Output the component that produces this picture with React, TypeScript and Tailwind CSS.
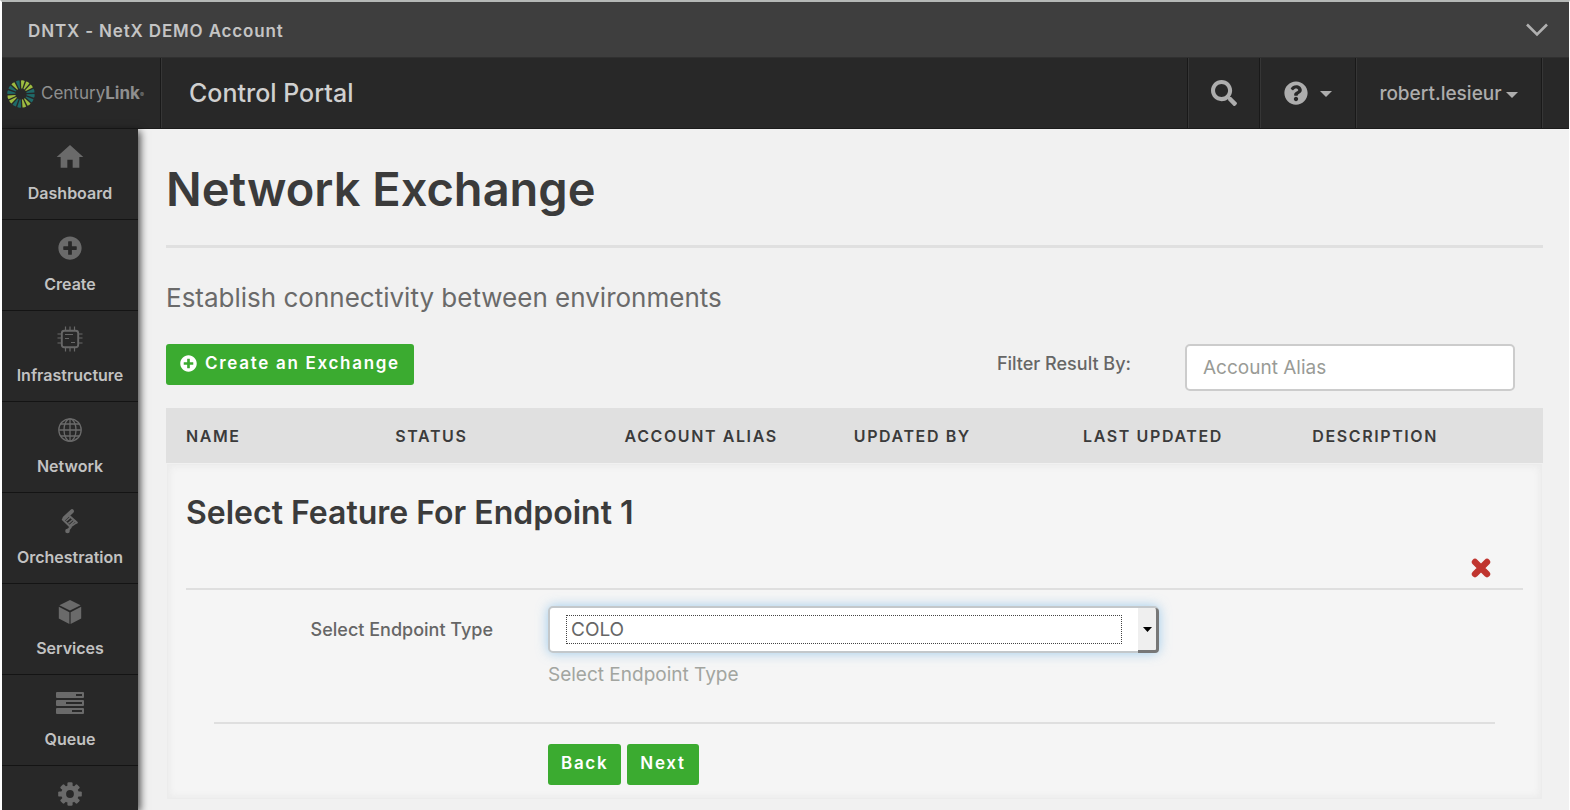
import React from "react";
import { FaPlusCircle, FaSearch, FaQuestionCircle } from "react-icons/fa";
import { MdHome } from "react-icons/md";

const iconClass = "size-6 text-[#6a6a6a]";

function ChipIcon() {
  return (
    <svg viewBox="0 0 26 26" className="h-[26px] w-[26px] text-[#686868]" fill="none" stroke="currentColor" strokeWidth="1.2" aria-hidden="true">
      <rect x="4.8" y="4.8" width="16.4" height="16.4" rx="2.5" strokeWidth="1.9" />
      <path d="M8.5 .5v3.8M13 .5v3.8M17.5 .5v3.8M8.5 21.7v3.8M13 21.7v3.8M17.5 21.7v3.8M.5 8h3.8M.5 12h3.8M.5 17h3.8M21.7 8h3.8M21.7 12h3.8M21.7 17h3.8M8 8.5h8M8 12.5h4M14 16.5h4" />
    </svg>
  );
}

function GlobeIcon() {
  return (
    <svg viewBox="0 0 24 24" className={iconClass} fill="none" stroke="currentColor" strokeWidth="1.3" aria-hidden="true">
      <circle cx="12" cy="12" r="11.2" />
      <ellipse cx="12" cy="12" rx="6" ry="11.2" />
      <path d="M12 .8v22.4M.8 12h22.4M3 6h18M3 18h18" />
    </svg>
  );
}

function ScriptIcon() {
  return (
    <svg viewBox="0 0 18 26" className="h-[26px] w-[18px] text-[#6a6a6a]" fill="none" stroke="currentColor" aria-hidden="true">
      <path d="M3.4 10.2 11 3.2" strokeWidth="4" strokeLinecap="round" />
      <path d="M1.8 11.5 8.8 18.2M9 8.4l6.8 6.2" strokeWidth="2" strokeLinecap="round" />
      <path d="M5.2 13 10 8.8M7.4 15.4l4.8-4.2" strokeWidth="1.5" />
      <path d="M9 19 15.6 14.6M8.4 17.8l5.4-4.8" strokeWidth="1.7" strokeLinecap="round" />
      <path d="M6.7 22.4 10 18.8" strokeWidth="2.4" />
      <circle cx="6.5" cy="23" r="2.3" fill="currentColor" stroke="none" />
    </svg>
  );
}

function CubeIcon() {
  return (
    <svg viewBox="0 0 24 24" className={iconClass} fill="currentColor" aria-hidden="true">
      <path d="M12 0 22.6 5.2 12 10.6 1.4 5.2zM.8 6.8 11.4 12.2V24L.8 18.4zM23.2 6.8 12.6 12.2V24l10.6-5.6z" />
    </svg>
  );
}

function GearIcon() {
  return (
    <svg viewBox="-12 -12 24 24" className={iconClass} aria-hidden="true">
      {[0, 45, 90, 135].map((angle) => (
        <rect key={angle} x="-2.6" y="-11.8" width="5.2" height="23.6" rx="1.2" fill="currentColor" transform={`rotate(${angle})`} />
      ))}
      <circle r="8.8" fill="currentColor" />
      <circle r="3.9" fill="#282828" />
    </svg>
  );
}

function QueueIcon() {
  return (
    <svg viewBox="0 0 28 24" className="h-6 w-7 text-[#6a6a6a]" aria-hidden="true">
      <g fill="currentColor">
        <rect y="1" width="28" height="6" rx="1" />
        <rect y="9" width="28" height="6" rx="1" />
        <rect y="17" width="28" height="6" rx="1" />
      </g>
      <g fill="#282828">
        <rect x="20" y="3" width="6" height="2" />
        <rect x="10" y="11" width="16" height="2" />
        <rect x="16" y="19" width="10" height="2" />
      </g>
    </svg>
  );
}

const LIME = "#9dbb40";
const TEAL = "#1f6a69";
const petals = [LIME, LIME, LIME, TEAL, TEAL, TEAL, LIME, LIME, TEAL, TEAL, LIME, LIME, TEAL, TEAL, LIME, TEAL];

function LogoMark() {
  return (
    <svg viewBox="-14 -14 28 28" className="size-7 shrink-0" aria-hidden="true">
      {petals.map((fill, i) => (
        <path key={i} d="M-.5 -5.6 L-1.9 -13.4 Q0 -14.2 1.9 -13.4 L.5 -5.6 Z" fill={fill} transform={`rotate(${i * 22.5 + 8})`} />
      ))}
    </svg>
  );
}

function Caret() {
  return (
    <svg viewBox="0 0 12 6" className="mt-[2px] h-[6px] w-3" fill="currentColor" aria-hidden="true">
      <path d="M0 0h12L6 6z" />
    </svg>
  );
}

const navItems = [
  { id: "dashboard", label: "Dashboard", icon: <MdHome className="size-8 text-[#6a6a6a]" /> },
  { id: "create", label: "Create", icon: <FaPlusCircle className={iconClass} /> },
  { id: "infrastructure", label: "Infrastructure", icon: <ChipIcon /> },
  { id: "network", label: "Network", icon: <GlobeIcon /> },
  { id: "orchestration", label: "Orchestration", icon: <ScriptIcon /> },
  { id: "services", label: "Services", icon: <CubeIcon /> },
  { id: "queue", label: "Queue", icon: <QueueIcon /> },
  { id: "settings", label: "", icon: <GearIcon /> },
];

const divider = "border-l border-[#191919] shadow-[inset_1px_0_0_#363636]";
const greenButton =
  "flex h-[41px] items-center rounded-[3px] bg-[#3bab30] pb-[2px] text-[17px] font-semibold tracking-widest text-white";

export default function App() {
  return (
    <div className="flex h-screen flex-col overflow-hidden border-t-2 border-r border-l-2 border-x-white border-t-[#b5b8b6] bg-[#f1f1f1] font-['Inter','Liberation_Sans',sans-serif] text-[#3b3b3b]">
      <div className="flex h-14 shrink-0 items-center justify-between border-b border-[#303030] bg-[#3e3e3e] pr-5 pl-[26px]">
        <span className="pt-1 text-[17px] font-semibold tracking-wider text-[#c4c4c4]">DNTX - NetX DEMO Account</span>
        <button type="button" aria-label="Switch account" className="text-[#b0b0b0]">
          <svg viewBox="0 0 24 14" className="h-[14px] w-6" fill="none" stroke="currentColor" strokeWidth="2.6" aria-hidden="true">
            <path d="M2 1.5l10 10 10-10" />
          </svg>
        </button>
      </div>

      <header className="flex h-[71px] shrink-0 items-stretch border-b border-[#1b1b1b] bg-[#282828] text-[#adadad]">
        <a href="#home" className="flex w-[158px] items-center gap-[6px] pt-[2px] pl-[5px] text-[#8f8f8f]">
          <LogoMark />
          <span className="flex items-center text-[17px]">
            Century<b className="font-bold">Link</b>
            <span className="text-[6px]">®</span>
          </span>
        </a>
        <div className={`flex flex-1 items-center pt-[2px] pl-7 text-[25px] font-medium text-[#d0d0d0] ${divider}`}>Control Portal</div>
        <button type="button" aria-label="Search" className={`flex w-[72px] items-center justify-center ${divider}`}>
          <FaSearch className="size-[26px]" />
        </button>
        <button type="button" aria-label="Help" className={`flex w-24 items-center justify-center gap-3 ${divider}`}>
          <FaQuestionCircle className="size-6" />
          <Caret />
        </button>
        <button type="button" className={`flex w-[186px] items-center justify-center gap-1 pt-[2px] text-[19px] font-medium ${divider}`}>
          robert.lesieur
          <Caret />
        </button>
        <div className={`w-7 ${divider}`} />
      </header>

      <div className="flex min-h-0 flex-1">
        <nav className="z-10 w-[136px] shrink-0 overflow-hidden bg-[#282828] shadow-[2px_2px_8px_rgba(0,0,0,0.75)]">
          {navItems.map((item) => (
            <a
              key={item.id}
              href={`#${item.id}`}
              aria-label={item.id}
              className="flex h-[91px] flex-col items-center border-b border-[#141414] pt-[14px] text-base leading-6 font-semibold text-[#c2c2c2]"
            >
              <span className="mb-[10px] flex h-7 items-center">{item.icon}</span>
              {item.label}
            </a>
          ))}
        </nav>

        <main className="min-w-0 flex-1 pr-[26px] pl-7">
          <h1 className="border-b-[3px] border-[#e0e0e0] pt-7 pb-[24px] text-[47px] leading-[64px] font-semibold">Network Exchange</h1>
          <p className="mt-8 text-[26px] leading-9 text-[#6a6a6a]">Establish connectivity between environments</p>

          <div className="mt-7 flex items-start justify-between pr-7">
            <button type="button" className={`${greenButton} gap-2 px-[14px]`}>
              <FaPlusCircle className="size-[17px]" />
              Create an Exchange
            </button>
            <div className="flex items-start">
              <label htmlFor="alias" className="mr-[54px] pt-2 text-lg leading-6 font-medium text-[#666]">
                Filter Result By:
              </label>
              <input
                id="alias"
                placeholder="Account Alias"
                className="h-[47px] w-[330px] rounded-[5px] border-2 border-[#ccc] bg-white px-4 text-[19px] placeholder:text-[#999b96]"
              />
            </div>
          </div>

          <table className="mt-[17px] w-full table-fixed text-left">
            <thead>
              <tr className="h-[55px] bg-[#e0e0e0] text-base tracking-widest">
                <th className="w-[16.65%] pl-5 font-semibold">NAME</th>
                <th className="w-[16.65%] font-semibold">STATUS</th>
                <th className="w-[16.65%] font-semibold">ACCOUNT ALIAS</th>
                <th className="w-[16.65%] font-semibold">UPDATED BY</th>
                <th className="w-[16.65%] font-semibold">LAST UPDATED</th>
                <th className="font-semibold">DESCRIPTION</th>
              </tr>
            </thead>
          </table>

          <section className="mx-[1px] mt-[1px] border border-[#ececec] bg-[#f5f5f5] px-[18px] pt-6 pb-[13px] shadow-[inset_0_0_6px_2px_#ebebeb]">
            <h2 className="text-[32px] leading-[48px] font-semibold">Select Feature For Endpoint 1</h2>
            <div className="flex h-[53px] items-center justify-end border-b-2 border-[#dfdfdf] pt-[10px] pr-8">
              <button type="button" aria-label="Close" className="text-[#c0352f]">
                <svg viewBox="0 0 20 20" className="size-5" fill="none" stroke="currentColor" strokeWidth="6.4" strokeLinecap="round" aria-hidden="true">
                  <path d="M4 4l12 12M16 4L4 16" />
                </svg>
              </button>
            </div>

            <form className="px-7" onSubmit={(e) => e.preventDefault()}>
              <div className="flex items-start pt-4">
                <label htmlFor="endpoint" className="w-[279px] shrink-0 pt-3 text-right text-lg leading-6 font-medium text-[#666]">
                  Select Endpoint Type
                </label>
                <div className="ml-[55px] w-[611px]">
                  <div className="relative flex h-[47px] rounded-[5px] border-2 border-[#c3c8cb] bg-white shadow-[0_0_12px_rgba(100,175,230,0.6)]">
                    <select
                      id="endpoint"
                      defaultValue="COLO"
                      className="my-[7px] ml-4 min-w-0 flex-1 appearance-none border border-dotted border-[#444] bg-white pl-1 text-[19px] leading-6 text-[#666] outline-none"
                    >
                      <option>COLO</option>
                    </select>
                    <span className="pointer-events-none -mr-[2px] -mb-[2px] ml-4 flex w-[21px] items-center justify-center rounded-r-[4px] border-r-3 border-b-3 border-[#777] bg-[#efefef] text-black">
                      <svg viewBox="0 0 9 5" className="h-[5px] w-[9px]" fill="currentColor" aria-hidden="true">
                        <path d="M0 0h9L4.500 5z" />
                      </svg>
                    </span>
                  </div>
                  <p className="mt-2 text-[19px] leading-7 text-[#a2a5a0]">Select Endpoint Type</p>
                </div>
              </div>
              <div className="mt-[33px] border-t-2 border-[#dfdfdf] pt-5">
                <div className="ml-[334px] flex gap-[6px]">
                  <button type="button" className={`${greenButton} px-[13px]`}>Back</button>
                  <button type="button" className={`${greenButton} px-[13px]`}>Next</button>
                </div>
              </div>
            </form>
          </section>
        </main>
      </div>
    </div>
  );
}
